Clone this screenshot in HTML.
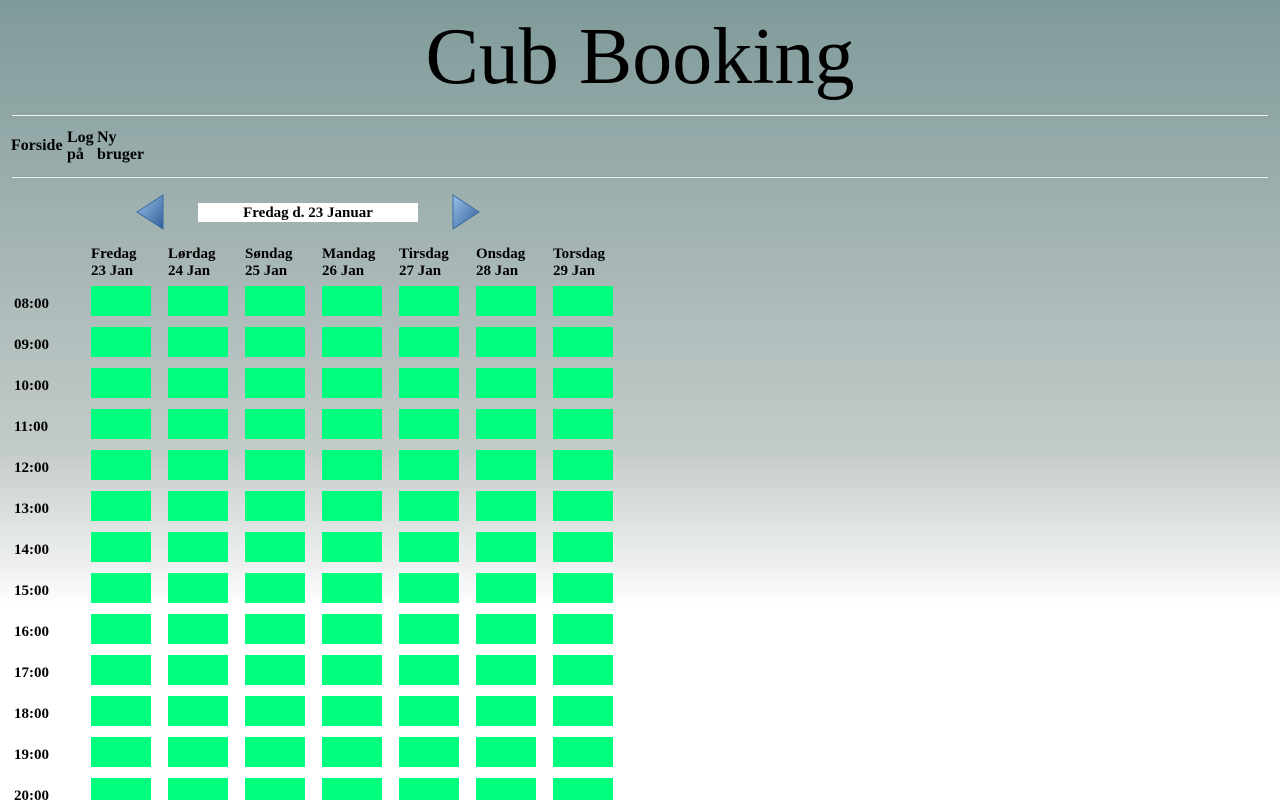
<!DOCTYPE html>
<html><head><meta charset="utf-8"><style>
html,body{margin:0;padding:0;width:1280px;height:800px;overflow:hidden}
body{background:linear-gradient(to bottom,#7f9a9a 0px,#c3cbc9 450px,#ffffff 610px,#ffffff 800px);font-family:"Liberation Serif",serif;color:#000;position:relative}
.a{position:absolute}
h1{position:absolute;left:0;width:1280px;top:9px;margin:0;text-align:center;font-weight:normal;font-size:80px;line-height:96px}
.hr{position:absolute;left:12px;width:1256px;height:1px;background:#eef2f2;border-top:1px solid #8fa3a3}
.b{font-weight:bold;font-size:15px;line-height:17px}
.n{font-size:16px}
.row{position:absolute;left:14px;height:30px}
.row span{position:absolute;left:0;top:10px;font-weight:bold;font-size:15px}
.row i{position:absolute;top:0;width:60px;height:30px;background:#00ff7f}
</style></head><body>
<h1>Cub Booking</h1>
<div class="hr" style="top:114px"></div>
<div class="hr" style="top:176px"></div>
<div class="a b n" style="left:11px;top:137px">Forside</div>
<div class="a b n" style="left:67px;top:129px">Log<br>på</div>
<div class="a b n" style="left:97px;top:129px">Ny<br>bruger</div>
<svg class="a" style="left:136px;top:194px" width="28" height="36" viewBox="0 0 28 36"><defs><linearGradient id="g" x1="0" y1="0" x2="1" y2="1"><stop offset="0" stop-color="#9bc0e8"/><stop offset="1" stop-color="#2f5f9a"/></linearGradient></defs><polygon points="1,18 27,1 27,35" fill="url(#g)" stroke="#3a6aa0" stroke-width="1"/></svg>
<svg class="a" style="left:452px;top:194px" width="28" height="36" viewBox="0 0 28 36"><polygon points="27,18 1,1 1,35" fill="url(#g)" stroke="#3a6aa0" stroke-width="1"/></svg>
<div class="a b" style="left:198px;top:203px;width:220px;height:19px;background:#fff;text-align:center;line-height:20px">Fredag d. 23 Januar</div>
<div class="a b" style="left:91px;top:246px">Fredag<br>23 Jan</div>
<div class="a b" style="left:168px;top:246px">Lørdag<br>24 Jan</div>
<div class="a b" style="left:245px;top:246px">Søndag<br>25 Jan</div>
<div class="a b" style="left:322px;top:246px">Mandag<br>26 Jan</div>
<div class="a b" style="left:399px;top:246px">Tirsdag<br>27 Jan</div>
<div class="a b" style="left:476px;top:246px">Onsdag<br>28 Jan</div>
<div class="a b" style="left:553px;top:246px">Torsdag<br>29 Jan</div>
<div class="row" style="top:286px"><span>08:00</span><i style="left:77px"></i><i style="left:154px"></i><i style="left:231px"></i><i style="left:308px"></i><i style="left:385px"></i><i style="left:462px"></i><i style="left:539px"></i></div>
<div class="row" style="top:327px"><span>09:00</span><i style="left:77px"></i><i style="left:154px"></i><i style="left:231px"></i><i style="left:308px"></i><i style="left:385px"></i><i style="left:462px"></i><i style="left:539px"></i></div>
<div class="row" style="top:368px"><span>10:00</span><i style="left:77px"></i><i style="left:154px"></i><i style="left:231px"></i><i style="left:308px"></i><i style="left:385px"></i><i style="left:462px"></i><i style="left:539px"></i></div>
<div class="row" style="top:409px"><span>11:00</span><i style="left:77px"></i><i style="left:154px"></i><i style="left:231px"></i><i style="left:308px"></i><i style="left:385px"></i><i style="left:462px"></i><i style="left:539px"></i></div>
<div class="row" style="top:450px"><span>12:00</span><i style="left:77px"></i><i style="left:154px"></i><i style="left:231px"></i><i style="left:308px"></i><i style="left:385px"></i><i style="left:462px"></i><i style="left:539px"></i></div>
<div class="row" style="top:491px"><span>13:00</span><i style="left:77px"></i><i style="left:154px"></i><i style="left:231px"></i><i style="left:308px"></i><i style="left:385px"></i><i style="left:462px"></i><i style="left:539px"></i></div>
<div class="row" style="top:532px"><span>14:00</span><i style="left:77px"></i><i style="left:154px"></i><i style="left:231px"></i><i style="left:308px"></i><i style="left:385px"></i><i style="left:462px"></i><i style="left:539px"></i></div>
<div class="row" style="top:573px"><span>15:00</span><i style="left:77px"></i><i style="left:154px"></i><i style="left:231px"></i><i style="left:308px"></i><i style="left:385px"></i><i style="left:462px"></i><i style="left:539px"></i></div>
<div class="row" style="top:614px"><span>16:00</span><i style="left:77px"></i><i style="left:154px"></i><i style="left:231px"></i><i style="left:308px"></i><i style="left:385px"></i><i style="left:462px"></i><i style="left:539px"></i></div>
<div class="row" style="top:655px"><span>17:00</span><i style="left:77px"></i><i style="left:154px"></i><i style="left:231px"></i><i style="left:308px"></i><i style="left:385px"></i><i style="left:462px"></i><i style="left:539px"></i></div>
<div class="row" style="top:696px"><span>18:00</span><i style="left:77px"></i><i style="left:154px"></i><i style="left:231px"></i><i style="left:308px"></i><i style="left:385px"></i><i style="left:462px"></i><i style="left:539px"></i></div>
<div class="row" style="top:737px"><span>19:00</span><i style="left:77px"></i><i style="left:154px"></i><i style="left:231px"></i><i style="left:308px"></i><i style="left:385px"></i><i style="left:462px"></i><i style="left:539px"></i></div>
<div class="row" style="top:778px"><span>20:00</span><i style="left:77px"></i><i style="left:154px"></i><i style="left:231px"></i><i style="left:308px"></i><i style="left:385px"></i><i style="left:462px"></i><i style="left:539px"></i></div>
</body></html>
